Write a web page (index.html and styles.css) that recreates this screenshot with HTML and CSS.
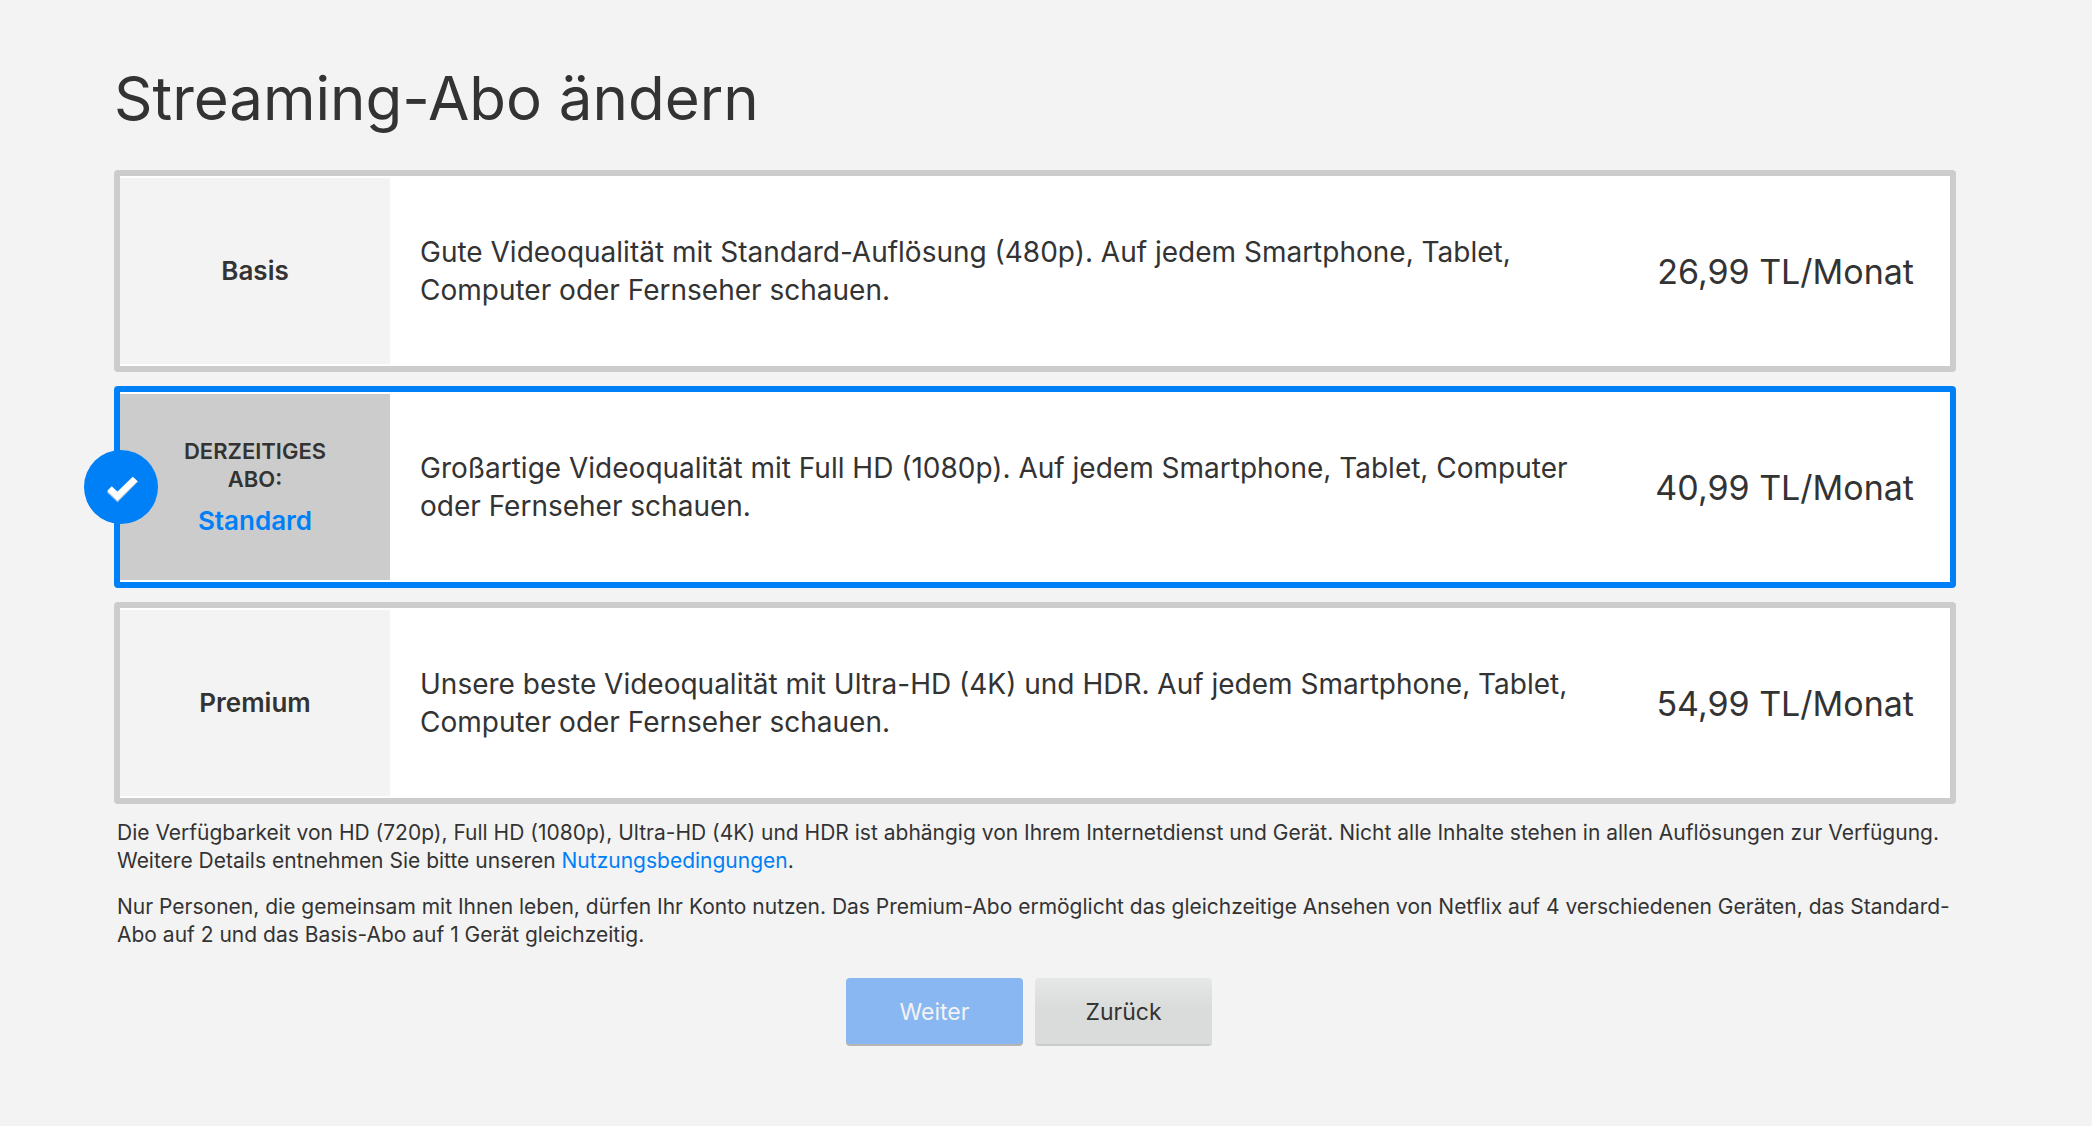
FILE: index.html
```html
<!DOCTYPE html>
<html lang="de">
<head>
    <meta charset="UTF-8">
    <meta name="viewport" content="width=device-width, initial-scale=1.0">
    <title>Streaming-Abo ändern</title>
    <link rel="stylesheet" href="styles.css">
</head>
<body>
    <main class="container">
        <h1>Streaming-Abo ändern</h1>

        <form>
            <div class="plans">
                <label class="plan">
                    <input class="plan-radio" type="radio" name="plan" value="basic">
                    <span class="plan-label">
                        <span class="plan-name">Basis</span>
                    </span>
                    <span class="plan-text">Gute Videoqualität mit Standard-Auflösung (480p). Auf jedem Smartphone, Tablet, Computer oder Fernseher schauen.</span>
                    <span class="plan-price">26,99 TL/Monat</span>
                </label>

                <label class="plan selected">
                    <input class="plan-radio" type="radio" name="plan" value="standard" checked>
                    <span class="plan-label">
                        <span class="plan-current">Derzeitiges Abo:</span>
                        <span class="plan-name">Standard</span>
                    </span>
                    <span class="plan-text">Großartige Videoqualität mit Full HD (1080p). Auf jedem Smartphone, Tablet, Computer oder Fernseher schauen.</span>
                    <span class="plan-price">40,99 TL/Monat</span>
                    <span class="check">
                        <svg viewBox="0 0 74 74" aria-hidden="true">
                            <path d="M25 40l8.5 8L52 29.500" fill="none" stroke="#b5c9dd" stroke-width="6"/>
                            <path d="M25.500 38.500l8 7.500 17.500-17" fill="none" stroke="#fff" stroke-width="6.500"/>
                        </svg>
                    </span>
                </label>

                <label class="plan">
                    <input class="plan-radio" type="radio" name="plan" value="premium">
                    <span class="plan-label">
                        <span class="plan-name">Premium</span>
                    </span>
                    <span class="plan-text">Unsere beste Videoqualität mit Ultra-HD (4K) und HDR. Auf jedem Smartphone, Tablet, Computer oder Fernseher schauen.</span>
                    <span class="plan-price">54,99 TL/Monat</span>
                </label>
            </div>

            <div class="notes">
                <p>Die Verfügbarkeit von HD (720p), Full HD (1080p), Ultra-HD (4K) und HDR ist abhängig von Ihrem Internetdienst und Gerät. Nicht alle Inhalte stehen in allen Auflösungen zur Verfügung. Weitere Details entnehmen Sie bitte unseren <a href="#">Nutzungsbedingungen</a>.</p>
                <p>Nur Personen, die gemeinsam mit Ihnen leben, dürfen Ihr Konto nutzen. Das Premium-Abo ermöglicht das gleichzeitige Ansehen von Netflix auf 4 verschiedenen Geräten, das Standard-Abo auf 2 und das Basis-Abo auf 1 Gerät gleichzeitig.</p>
            </div>

            <div class="actions">
                <button class="btn btn-primary" type="submit" disabled>Weiter</button>
                <button class="btn btn-secondary" type="button">Zurück</button>
            </div>
        </form>
    </main>
</body>
</html>
```
FILE: styles.css
```css
* {
    box-sizing: border-box;
}

body {
    margin: 0;
    background: #f3f3f3;
    color: #333;
    font-family: Inter, "Liberation Sans", sans-serif;
}

.container {
    padding: 62px 136px 80px 114px;
}

h1 {
    margin: 0 0 36px;
    font-size: 60px;
    font-weight: 400;
    line-height: 72px;
}

.plans {
    display: flex;
    flex-direction: column;
    gap: 14px;
}

.plan {
    position: relative;
    display: flex;
    align-items: center;
    min-height: 202px;
    padding: 2px 36px 2px 0;
    background: #fff;
    border: 6px solid #ccc;
    border-radius: 4px;
    cursor: pointer;
}

.plan.selected {
    border-color: #0080f6;
}

/* the whole card is the click target, so the radio itself is hidden */
.plan-radio {
    position: absolute;
    opacity: 0;
    pointer-events: none;
}

.plan-label {
    display: flex;
    flex: 0 0 270px;
    flex-direction: column;
    align-items: center;
    align-self: stretch;
    justify-content: center;
    gap: 12px;
    padding: 0 48px;
    background: #f3f3f3;
    text-align: center;
}

.plan-name {
    font-size: 26px;
    font-weight: 600;
    line-height: 32px;
}

.plan-current {
    font-size: 22px;
    font-weight: 600;
    line-height: 28px;
    text-transform: uppercase;
}

.selected .plan-label {
    background: #ccc;
}

.selected .plan-name {
    color: #0080f6;
}

.plan-text {
    flex: 1;
    padding: 0 60px 0 30px;
    font-size: 28px;
    line-height: 38px;
}

.plan-price {
    padding-top: 2px;
    font-size: 34px;
    line-height: 40px;
    white-space: nowrap;
}

.check {
    position: absolute;
    top: 50%;
    left: -36px;
    width: 74px;
    height: 74px;
    background: #0080f6;
    border-radius: 50%;
    transform: translateY(-50%);
}

.check svg {
    display: block;
}

.notes {
    padding: 15px 0 0 3px;
    font-size: 21px;
    line-height: 28px;
}

.notes p {
    margin: 0 0 18px;
}

.notes a {
    color: #0080f6;
    text-decoration: none;
}

.actions {
    display: flex;
    justify-content: center;
    gap: 12px;
    padding: 11px 12px 0 0;
}

.btn {
    min-width: 177px;
    height: 66px;
    padding: 2px 48px 0;
    border: none;
    border-radius: 4px;
    font-family: inherit;
    font-size: 23px;
    cursor: pointer;
}

.btn-primary {
    background: #88b7f2;
    color: #f3f3f3;
    box-shadow: 0 2px 0 #b5b5b5;
    cursor: default;
}

.btn-secondary {
    background: linear-gradient(#e6e8e7, #dadcdb 45%);
    color: #333;
    box-shadow: 0 2px 0 #c9cbca;
}
```
